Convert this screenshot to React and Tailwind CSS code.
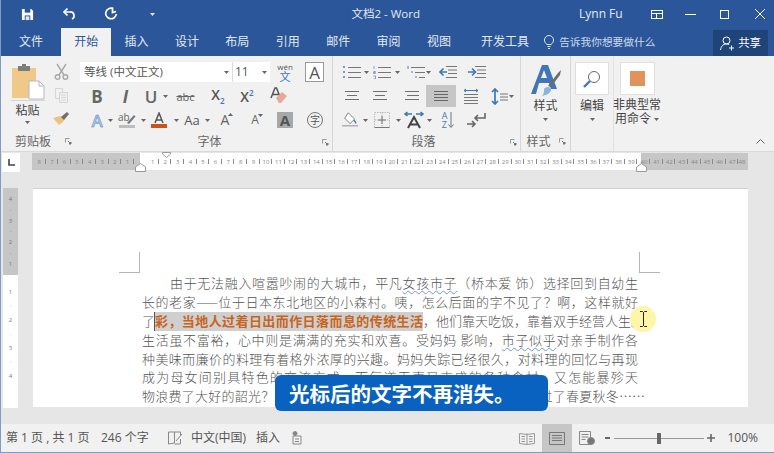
import React from "react";

const G = "#6f6f6f";
const Svg = ({ w = 16, h = 16, children, className = "" }) => (
  <svg width={w} height={h} viewBox={`0 0 ${w} ${h}`} fill="none" className={className}>{children}</svg>
);
const Caret = ({ c = "#666" }) => <svg width="5" height="3" viewBox="0 0 5 3"><path d="M0 0h5L2.5 3z" fill={c} /></svg>;
const Cell = ({ w, children, active }) => (
  <div className={`${w} h-[22px] flex items-center justify-center shrink-0 ${active ? "bg-[#c6c6c6]" : ""}`}>{children}</div>
);
const Row = ({ pl, children }) => <div className={`h-6 flex items-center ${pl}`}>{children}</div>;
const Launcher = () => (
  <svg width="7" height="7" viewBox="0 0 7 7"><path d="M0.5 0.5h4M0.5 0.5v4" stroke="#999" /><path d="M3 3l3 3M6 4v2H4" stroke="#777" /></svg>
);
const GroupLabel = ({ children, className = "" }) => (
  <div className={`h-5 relative flex items-center justify-center text-[12px] text-[#666] ${className}`}>{children}</div>
);

const Lines = ({ rows, w = 16, h = 12, c = G }) => (
  <Svg w={w} h={h}>
    {rows.map((r, i) => <path key={i} d={`M${r[0]} ${r[2]}H${r[1]}`} stroke={c} strokeWidth="1" />)}
  </Svg>
);

const Save = () => (
  <svg width="13" height="13" viewBox="0 0 14 14"><path d="M1 1h10l2 2v10H1z" fill="#fff" /><path d="M4 1h6v4H4z" fill="#2b579a" /><path d="M4 8h6v5H4z" fill="#2b579a" /><path d="M5 9h4v4H5z" fill="#dfe6f1" /></svg>
);
const Undo = () => (
  <svg width="14" height="14" viewBox="0 0 14 14" fill="none" stroke="#fff" strokeWidth="1.7"><path d="M5.5 1.5L2 5l3.5 3.5" /><path d="M2 5h6a3.7 3.7 0 0 1 2 7" /></svg>
);
const Redo = () => (
  <svg width="14" height="14" viewBox="0 0 14 14" fill="none" stroke="#fff" strokeWidth="1.7"><path d="M9 1.5A5.3 5.3 0 1 0 12.3 7" /><path d="M8.5 0.5v5l3.5-1" /></svg>
);
const Paste = () => (
  <svg width="34" height="36" viewBox="0 0 34 36">
    <path d="M1 4h24v30H1z" fill="#f0c98a" />
    <path d="M7 2h12v5H7z" fill="#7d7d7d" /><path d="M11 0h4v3h-4z" fill="#7d7d7d" />
    <path d="M18 17h10l5 5v13H18z" fill="#fff" stroke="#b8b8b8" /><path d="M28 17v5h5" fill="none" stroke="#b8b8b8" />
  </svg>
);
const Cut = () => (
  <svg width="15" height="17" viewBox="0 0 15 17" fill="none" stroke="#a8a8a8" strokeWidth="1.4"><path d="M3 1l7 11M12 1L5 12" /><circle cx="3.6" cy="14" r="2.3" /><circle cx="11.4" cy="14" r="2.3" /></svg>
);
const Copy = () => (
  <svg width="15" height="16" viewBox="0 0 15 16" fill="none" stroke="#d5d5d5"><path d="M1.5 1.5h7v4M1.5 1.5v10h4" /><path d="M5.5 5.5h8v10h-8z" /><path d="M7 8h5M7 10.5h5M7 13h5" /></svg>
);
const Painter = () => (
  <svg width="16" height="14" viewBox="0 0 16 14"><path d="M0 6l6 7 4-3 2-4-5-2z" fill="#edc27f" /><path d="M8 5l6-5 2 2-5 6z" fill="#6f6f6f" /></svg>
);
const Txt = ({ children, className = "" }) => <span className={`leading-none ${className}`}>{children}</span>;
const Eraser = () => (
  <svg width="18" height="18" viewBox="0 0 18 18"><path d="M1 11L5 1h1.500l4 10M2.500 7.500h6" stroke="#555" strokeWidth="1.500" fill="none" /><path d="M6 11l6-6 5 4-6 7H9z" fill="#e7a995" /></svg>
);
const Highlighter = () => (
  <svg width="18" height="17" viewBox="0 0 18 17"><path d="M9 11l7-8 1.5 1.5L11 12z" fill="#777" /><path d="M1 13h16v3H1z" fill="#bdbdbd" /></svg>
);
const ColorA = () => (
  <svg width="18" height="17" viewBox="0 0 18 17"><path d="M5 11L9 1l4 10M6.2 8h5.6" stroke="#555" strokeWidth="1.5" fill="none" /><path d="M1 12h16v4H1z" fill="#c9521d" /></svg>
);
const CircleZi = () => (
  <div className="w-4 h-4 rounded-full border border-[#777] flex items-center justify-center text-[10px] text-[#555] leading-none">字</div>
);
const Bullet = ({ n }) => (
  <svg width="18" height="14" viewBox="0 0 18 14" stroke="#777" fill="none">
    {n ? (
      <path d="M1 1v3M0.500 6.500h2v1h-2v1h2M0.500 11h2v3h-2" stroke="#5a7fb0" strokeWidth="0.700" />
    ) : (
      <path d="M0 2h2M0 7h2M0 12h2" stroke="#4e7fb8" strokeWidth="1.5" />
    )}
    <path d="M5 2.5h13M5 7.5h13M5 12.5h13" />
  </svg>
);
const Multi = () => (
  <svg width="18" height="14" viewBox="0 0 18 14" stroke="#777" fill="none">
    <path d="M1 1v3" stroke="#5a7fb0" />
    <path d="M4 2.5h14M8 7.5h10M12 12.5h6" />
    <path d="M5 6v2M9 11v2" stroke="#5a7fb0" />
  </svg>
);
const Indent = ({ inc }) => (
  <svg width="18" height="14" viewBox="0 0 18 14" stroke="#777" fill="none">
    <path d="M7 1.5h11M9 5h9M9 8.5h9M7 12.5h11" />
    {inc ? <path d="M0 7h7M4 3.5L7.5 7 4 10.5" stroke="#3d78b8" strokeWidth="1.6" /> : <path d="M8 7H1M4.5 3.5L1 7l3.5 3.5" stroke="#3d78b8" strokeWidth="1.6" />}
  </svg>
);
const Dist = () => (
  <svg width="16" height="17" viewBox="0 0 16 17" fill="none"><path d="M1 2.5h14M3 1L1 2.5 3 4M13 1l2 1.5L13 4" stroke="#3d78b8" /><path d="M1 6.5h14M1 9.5h14M1 12.5h14M1 15.5h14" stroke="#777" strokeWidth="1.2" /></svg>
);
const LineSp = () => (
  <svg width="21" height="17" viewBox="0 0 21 17" fill="none"><path d="M4 1v15M1 4l3-3 3 3M1 13l3 3 3-3" stroke="#3d78b8" strokeWidth="1.7" /><path d="M9 6h8M9 9h8M9 12h8" stroke="#777" /></svg>
);
const Shade = () => (
  <svg width="20" height="18" viewBox="0 0 20 18" fill="none"><path d="M7 1l7 7-5 5-6-6z" fill="#fff" stroke="#777" /><path d="M13 9c2 2 3 3 2 4" stroke="#3d78b8" strokeWidth="1.5" /><path d="M0 15.5h18" stroke="#888" /></svg>
);
const Borders = () => (
  <svg width="16" height="16" viewBox="0 0 16 16" fill="none" stroke="#bbb"><path d="M.5.5h15v15H.5zM8 .5v15M.5 8h15" strokeDasharray="1.5 1" /><path d="M.5 15.5h15M8 4v8M4 8h8" stroke="#777" /></svg>
);
const CharDir = () => (
  <svg width="20" height="18" viewBox="0 0 20 18" fill="none"><path d="M1 3h7M3.500 1L1 3l2.500 2M12 3h7M16.500 1L19 3l-2.500 2" stroke="#3d78b8" strokeWidth="1.5" /><path d="M4 17l6-11 6 11M6 13.500h8" stroke="#444" strokeWidth="2" /></svg>
);
const Sort = () => (
  <div className="flex items-center gap-[1px]">
    <div className="flex flex-col text-[9px] leading-[9px] text-[#3d78b8]"><span>A</span><span>Z</span></div>
    <svg width="6" height="18" viewBox="0 0 6 18"><path d="M3 1v15M.5 13.500L3 16.500l2.500-3" stroke="#777" fill="none" /></svg>
  </div>
);
const ReturnI = () => (
  <svg width="20" height="16" viewBox="0 0 20 16" fill="none"><path d="M18 1v5H8M11 3L8 6l3 3" stroke="#666" strokeWidth="1.6" /><path d="M0 12h8M5 9l3 3-3 3" stroke="#666" strokeWidth="1.6" /></svg>
);
const StylesI = () => (
  <svg width="32" height="34" viewBox="0 0 32 34">
    <path d="M1 30L12 1h6l9 24h-6l-2-6H9l-3 11zM11 14h6l-3-8z" fill="#3f76b5" fillRule="evenodd" />
    <path d="M18 22l10-13 3-3-1 5-9 12z" fill="#6d6d6d" />
    <path d="M14 25c3-3 6-2 7 0 0 4-4 6-9 7 2-2 2-4 2-7z" fill="#8db3da" />
  </svg>
);
const Mag = () => (
  <svg width="18" height="18" viewBox="0 0 18 18" fill="none"><circle cx="11" cy="7" r="5.500" stroke="#666" /><path d="M7 11l-6 6" stroke="#3d78b8" strokeWidth="2.400" /></svg>
);
const Num = ({ children }) => (
  <div className="w-[12.6px] h-full shrink-0 relative flex items-center justify-center text-[6px] leading-none text-[#888]">
    {children}
    <span className="absolute right-0 top-[6px] h-[5px] w-px bg-[#888]" />
  </div>
);

const LINE = "h-[18.9px] leading-[18.9px] whitespace-nowrap [text-align:justify] [text-align-last:justify]";
const Wavy = ({ children }) => <span className="underline decoration-wavy decoration-[#6f93d6] decoration-[1px] underline-offset-2">{children}</span>;

const Tab = ({ w, children, active }) => (
  <div className={`${w} h-full flex items-center justify-center shrink-0 ${active ? "bg-[#f1f1f1] text-[#2b579a]" : "text-[#e3e9f3]"}`}>{children}</div>
);

export default function App() {
  const left = [8, 7, 6, 5, 4, 3, 2, 1];
  const mid = Array.from({ length: 39 }, (_, i) => i + 1);
  const right = [40, 41, 42, 43, 44, 45, 46, 47];
  return (
    <div className="w-[774px] h-[453px] overflow-hidden relative flex flex-col bg-[#e6e6e6] text-[12px] font-['Open_Sans','Noto_Sans_CJK_SC',sans-serif] border-l border-b border-[#7f9cc4]">
      {/* title bar */}
      <div className="h-[28px] bg-[#2b579a] flex items-center text-[#e3e9f3] shrink-0">
        <div className="w-[49px] pl-[3px] flex justify-center"><Save /></div>
        <div className="w-[38px] flex justify-center"><Undo /></div>
        <div className="w-[46px] flex justify-center"><Redo /></div>
        <div className="w-[36px] flex justify-center"><Caret c="#e3e9f3" /></div>
        <div className="w-[250px] flex justify-end text-[11.500px] whitespace-nowrap">文档2 - Word</div>
        <div className="ml-[159px] text-[12px] whitespace-nowrap">Lynn Fu</div>
        <div className="ml-[28px] w-[12px] h-[9px] border border-white relative shrink-0"><span className="absolute left-0 right-0 top-[2px] h-px bg-white" /><span className="absolute left-[4px] top-[2px] bottom-0 w-px bg-white" /></div>
        <div className="ml-[22px] w-[11px] h-px bg-white shrink-0" />
        <div className="ml-[24px] w-[9px] h-[9px] border border-white shrink-0" />
        <svg className="ml-[26px] shrink-0" width="10" height="10" viewBox="0 0 10 10" stroke="#fff"><path d="M0 0l10 10M10 0L0 10" /></svg>
      </div>
      {/* tabs */}
      <div className="h-[28px] bg-[#2b579a] flex items-stretch text-[12px] shrink-0">
        <Tab w="w-[60px]">文件</Tab>
        <Tab w="w-[50.4px]" active>开始</Tab>
        <Tab w="w-[50.4px]">插入</Tab>
        <Tab w="w-[50.4px]">设计</Tab>
        <Tab w="w-[50.4px]">布局</Tab>
        <Tab w="w-[50.4px]">引用</Tab>
        <Tab w="w-[50.4px]">邮件</Tab>
        <Tab w="w-[50.4px]">审阅</Tab>
        <Tab w="w-[50.4px]">视图</Tab>
        <Tab w="w-[82px]">开发工具</Tab>
        <div className="flex items-center text-[#cdd8ea] text-[10.700px] w-[167px] whitespace-nowrap">
          <svg className="ml-[-2px] mr-[5px]" width="10" height="14" viewBox="0 0 10 14" fill="none" stroke="#dfe6f1"><path d="M3 9.500C1 8 .5 6.500.5 5a4.500 4.500 0 0 1 9 0c0 1.500-.5 3-2.500 4.500zM3.500 11.500h3M4 13.500h2" /></svg>
          告诉我你想要做什么
        </div>
        <div className="w-[55px] mt-[2px] bg-[#1f4478] flex items-center justify-center gap-[3px] text-white text-[11.500px]">
          <svg width="15" height="15" viewBox="0 0 15 15" fill="none" stroke="#fff"><circle cx="6.500" cy="4.500" r="3.500" /><path d="M.5 14c.5-3.500 2.500-6 6-6 1 0 2 .2 2.700.6M11.500 9.500v5M9 12h5" /></svg>
          共享
        </div>
      </div>
      {/* ribbon */}
      <div className="h-[96px] bg-[#f1f1f1] border-b border-[#d9d9d9] flex shrink-0 text-[#444]">
        {/* clipboard */}
        <div className="w-[71px] flex flex-col shrink-0">
          <div className="flex-1 flex">
            <div className="w-[49px] flex flex-col items-center pt-[8px] pl-[4px]">
              <Paste />
              <div className="w-[34px] h-px bg-[#d5d5d5]" />
              <div className="mt-[2px] text-[12px] leading-[16px]">粘贴</div>
              <div className="mt-[2px]"><Caret /></div>
            </div>
            <div className="w-[22px] flex flex-col items-center pt-[4px]">
              <Cell w="w-full"><Cut /></Cell>
              <div className="h-[2px]" />
              <Cell w="w-full"><Copy /></Cell>
              <div className="h-[2px]" />
              <Cell w="w-full"><Painter /></Cell>
            </div>
          </div>
          <GroupLabel className="pt-[1px]"><span className="mr-[7px]">剪贴板</span><span className="absolute right-[0px] top-[7px]"><Launcher /></span></GroupLabel>
        </div>
        {/* font */}
        <div className="w-[261px] flex flex-col shrink-0 border-r border-[#d6d6d6]">
          <div className="flex-1 pt-[4px]">
            <Row pl="pl-[8px]">
              <div className="w-[153px] h-[20px] bg-white flex items-center pl-[4px] pr-[3px] text-[11.500px] text-[#555] border-r border-[#ddd]">
                <span className="flex-1 whitespace-nowrap">等线 (中文正文)</span><Caret />
              </div>
              <div className="w-[37px] h-[20px] bg-white flex items-center pl-[2px] pr-[3px] text-[12px] text-[#555]"><span className="flex-1">11</span><Caret /></div>
              <div className="w-[30px] h-[20px] flex flex-col items-center justify-center leading-none">
                <span className="text-[8px] text-[#555] leading-[8px]">wén</span>
                <span className="text-[11px] text-[#3f76b5] leading-[11px]">文</span>
              </div>
              <div className="w-[19px] h-[20px] ml-[5px] bg-white border border-[#999] flex items-center justify-center text-[17px] leading-none text-[#555]">A</div>
            </Row>
            <Row pl="pl-[11px]">
              <Cell w="w-[28px]"><Txt className="text-[17px] font-bold text-[#666]">B</Txt></Cell>
              <Cell w="w-[29px]"><Txt className="text-[17px] font-bold italic text-[#666]">I</Txt></Cell>
              <Cell w="w-[22px]"><Txt className="text-[17px] font-semibold text-[#666]">U</Txt></Cell>
              <Cell w="w-[7px]"><Caret /></Cell>
              <Cell w="w-[33px]"><Txt className="text-[11px] line-through text-[#666]">abc</Txt></Cell>
              <Cell w="w-[32px]"><Txt className="text-[14px] text-[#555] font-semibold">X<span className="text-[8px] text-[#3f76b5] align-sub">2</span></Txt></Cell>
              <Cell w="w-[26px]"><Txt className="text-[14px] text-[#555] font-semibold">X<span className="text-[8px] text-[#3f76b5] align-super">2</span></Txt></Cell>
              <Cell w="w-[38px]"><Eraser /></Cell>
            </Row>
            <Row pl="pl-[14px]">
              <Cell w="w-[22px]"><Txt className="text-[17px] text-[#a9c6e6] font-semibold [-webkit-text-stroke:0.4px_#3f76b5]">A</Txt></Cell>
              <Cell w="w-[5px]"><Caret /></Cell>
              <Cell w="w-[28px]"><div className="relative w-[18px] h-[17px]"><span className="absolute left-0 top-0 text-[10px] leading-[10px] text-[#666]">ab</span><span className="absolute left-0 top-0"><Highlighter /></span></div></Cell>
              <Cell w="w-[5px]"><Caret /></Cell>
              <Cell w="w-[26px]"><ColorA /></Cell>
              <Cell w="w-[8px]"><Caret /></Cell>
              <Cell w="w-[24px]"><Txt className="text-[13px] text-[#555]">Aa</Txt></Cell>
              <Cell w="w-[6px]"><Caret /></Cell>
              <Cell w="w-[30px]"><Txt className="text-[14px] text-[#666] relative">A<svg className="absolute right-[-4px] top-[0px]" width="5" height="3" viewBox="0 0 5 3"><path d="M0 3l2.500-3L5 3z" fill="#666" /></svg></Txt></Cell>
              <Cell w="w-[30px]"><Txt className="text-[12px] text-[#666] relative">A<svg className="absolute right-[-4px] top-[0px]" width="5" height="3" viewBox="0 0 5 3"><path d="M0 0h5L2.500 3z" fill="#666" /></svg></Txt></Cell>
              <Cell w="w-[30px]"><div className="w-[16px] h-[16px] bg-[#a8a8a8] flex items-center justify-center text-[15px] font-bold leading-none text-[#555]">A</div></Cell>
              <Cell w="w-[30px]"><CircleZi /></Cell>
            </Row>
          </div>
          <GroupLabel className="pt-[1px]"><span className="ml-[15px]">字体</span><span className="absolute right-[3px] top-[7px]"><Launcher /></span></GroupLabel>
        </div>
        {/* paragraph */}
        <div className="w-[188px] flex flex-col shrink-0 border-r border-[#d6d6d6]">
          <div className="flex-1 pt-[4px]">
            <Row pl="pl-[10px]">
              <Cell w="w-[18px]"><Bullet /></Cell>
              <Cell w="w-[10px]"><Caret /></Cell>
              <Cell w="w-[22px]"><Bullet n /></Cell>
              <Cell w="w-[8px]"><Caret /></Cell>
              <div className="w-[5px]" />
              <Cell w="w-[19px]"><Multi /></Cell>
              <Cell w="w-[7px]"><Caret /></Cell>
              <Cell w="w-[32px]"><Indent /></Cell>
              <Cell w="w-[26px]"><Indent inc /></Cell>
            </Row>
            <Row pl="pl-[10px]">
              <Cell w="w-[18px]"><Lines rows={[[1, 15, 1.5], [3, 13, 5.5], [1, 15, 9.5]]} /></Cell>
              <Cell w="w-[38px]"><Lines rows={[[1, 15, 1.5], [3, 13, 5.5], [1, 15, 9.5]]} /></Cell>
              <Cell w="w-[25px]"><Lines rows={[[1, 15, 1.5], [3, 15, 5.5], [1, 15, 9.5]]} /></Cell>
              <div className="w-[2px]" />
              <Cell w="w-[30px]" active><Lines rows={[[1, 15, 1.5], [1, 15, 4.5], [1, 15, 7.5], [1, 15, 10.5]]} c="#666" /></Cell>
              <Cell w="w-[30px]"><Dist /></Cell>
              <Cell w="w-[30px]"><LineSp /></Cell>
              <span className="ml-[-7px]"><Caret /></span>
            </Row>
            <Row pl="pl-[9px]">
              <Cell w="w-[18px]"><Shade /></Cell>
              <Cell w="w-[10px]"><Caret /></Cell>
              <Cell w="w-[24px]"><Borders /></Cell>
              <Cell w="w-[8px]"><Caret /></Cell>
              <Cell w="w-[24px]"><CharDir /></Cell>
              <Cell w="w-[6px]"><Caret /></Cell>
              <Cell w="w-[32px]"><Sort /></Cell>
              <Cell w="w-[26px]"><ReturnI /></Cell>
            </Row>
          </div>
          <GroupLabel className="pt-[1px]"><span className="ml-[-6px]">段落</span><span className="absolute right-[3px] top-[7px]"><Launcher /></span></GroupLabel>
        </div>
        {/* styles */}
        <div className="w-[50px] flex flex-col shrink-0 border-r border-[#d6d6d6]">
          <div className="flex-1 flex flex-col items-center pt-[8px]">
            <StylesI />
            <div className="leading-[16px]">样式</div>
            <div className="mt-[4px]"><Caret /></div>
          </div>
          <GroupLabel className="pt-[1px]"><span className="mr-[14px]">样式</span><span className="absolute right-[4px] top-[7px]"><Launcher /></span></GroupLabel>
        </div>
        {/* edit */}
        <div className="w-[43px] flex flex-col items-center pt-[6px] shrink-0 border-r border-[#e2e2e2]">
          <div className="w-[34px] h-[33px] bg-white border border-[#e0e0e0] flex items-center justify-center"><Mag /></div>
          <div className="mt-[3px] leading-[16px]">编辑</div>
          <div className="mt-[4px]"><Caret /></div>
        </div>
        {/* custom */}
        <div className="w-[46px] flex flex-col items-center pt-[6px] shrink-0">
          <div className="w-[35px] h-[33px] bg-white border border-[#e0e0e0] flex items-center justify-center"><div className="w-[15px] h-[15px] bg-[#e0935a]" /></div>
          <div className="mt-[3px] leading-[14px] text-center whitespace-nowrap">非典型常<br />用命令 <span className="inline-block align-middle"><Caret /></span></div>
        </div>
        <div className="flex-1 flex items-end justify-end pb-[7px] pr-[9px]">
          <svg width="9" height="5" viewBox="0 0 9 5" fill="none" stroke="#666"><path d="M.5 4.500L4.500.5l4 4" /></svg>
        </div>
      </div>
      {/* workspace */}
      <div className="flex-1 grid grid-cols-[31px_716px_26px] grid-rows-[36px_1fr] min-h-0">
        <div className="pl-[1px] pt-[1px]">
          <div className="w-[18px] h-[19px] bg-white flex items-center justify-center">
            <svg width="7" height="7" viewBox="0 0 7 7"><path d="M1 0v6h6" stroke="#444" strokeWidth="1.600" fill="none" /></svg>
          </div>
        </div>
        <div className="relative">
          <div className="h-[17px] mt-[1px] flex bg-[#c6c6c6] overflow-hidden">
            <div className="w-[108px] flex shrink-0 justify-end pr-[6.3px]">{left.map((n) => <Num key={n}>{n}</Num>)}</div>
            <div className="w-[501px] flex shrink-0 bg-white pl-[6.3px]">{mid.map((n) => <Num key={n}>{n}</Num>)}</div>
            <div className="flex-1 flex ml-[-3.3px]">{right.map((n) => <Num key={n}>{n}</Num>)}<div className="w-[6px] shrink-0 flex items-center text-[6px] leading-none text-[#888]">48</div></div>
          </div>
          <svg className="absolute left-[103px] top-[11px]" width="11" height="9" viewBox="0 0 11 9"><path d="M.5 8.500V4L5.500.5l5 3.500v4.500z" fill="#fff" stroke="#999" /></svg>
          <svg className="absolute left-[130px] top-0" width="9" height="6" viewBox="0 0 9 6"><path d="M.5.5h8V2L4.500 5.500.5 2z" fill="#fff" stroke="#999" /></svg>
          <svg className="absolute left-[604px] top-[11px]" width="11" height="9" viewBox="0 0 11 9"><path d="M.5 8.500V4L5.500.5l5 3.500v4.500z" fill="#fff" stroke="#999" /></svg>
        </div>
        <div />
        <div className="pl-[2px]">
          <div className="w-[15px] h-[220px]">
            <div className="h-[87px] bg-[#c6c6c6] flex flex-col items-center justify-around py-[6px] text-[6px] leading-none text-[#777]">
              <span>4</span><span>·</span><span>3</span><span>·</span><span>2</span><span>·</span><span>1</span>
            </div>
            <div className="h-[133px] bg-white flex flex-col items-center gap-[8px] pt-[14px] text-[6px] leading-none text-[#777]">
              <span>1</span><span>·</span><span>2</span><span>·</span><span>3</span><span>·</span><span>4</span>
            </div>
          </div>
        </div>
        <div>
          <div className="h-[219px] ml-[1px] bg-white border-t border-[#d2d2d2] overflow-hidden relative">
            <div className="absolute left-[86px] top-[63px] w-[21px] h-[21px] border-r border-b border-[#b5b5b5]" />
            <div className="absolute left-[606px] top-[63px] w-[21px] h-[21px] border-l border-b border-[#b5b5b5]" />
            <div className="w-[496px] ml-[109px] mt-[85px] text-[13px] text-[#555] font-['Noto_Sans_CJK_SC',sans-serif] font-light">
              <div className={`${LINE} ml-[28px] w-[468px]`}>由于无法融入喧嚣吵闹的大城市，平凡<Wavy>女孩市子</Wavy>（桥本爱 饰）选择回到自幼生</div>
              <div className={LINE}>长的老家——位于日本东北地区的小森村。咦，怎么后面的字不见了？啊，这样就好</div>
              <div className="h-[18.9px] leading-[18.9px] whitespace-nowrap flex">
                <span className="w-[12px] shrink-0">了</span>
                <span className={`${LINE} w-[269px] shrink-0 bg-[#cfcfcf] text-[#c8641c] font-bold border-l border-[#555]`}>彩，当地人过着日出而作日落而息的传统生活</span>
                <span className={`${LINE} flex-1`}>，他们靠天吃饭，靠着双手经营人生。</span>
              </div>
              <div className={LINE}>生活虽不富裕，心中则是满满的充实和欢喜。受妈妈 影响，<Wavy>市子似乎</Wavy>对亲手制作各</div>
              <div className={LINE}>种美味而廉价的料理有着格外浓厚的兴趣。妈妈失踪已经很久，对料理的回忆与再现</div>
              <div className={LINE}>成为母女间别具特色的交流方式。而每道无声又丰盛的各种食材，又怎能暴殄天</div>
              <div className={`${LINE} w-[503px]`}>物浪费了大好的韶光？她们一年又一年，母女俩在这小森村里一起度过了春夏秋冬……</div>
            </div>
            {/* cursor highlight */}
            <div className="absolute left-[597px] top-[117px] w-[26px] h-[26px] rounded-full bg-[#fdf6a8] flex items-center justify-center">
              <svg width="9" height="16" viewBox="0 0 9 16" fill="none" stroke="#222"><path d="M1 .5h2.500l1 1 1-1H8M1 15.500h2.500l1-1 1 1H8M4.500 1.500v13" /></svg>
            </div>
          </div>
        </div>
        <div />
      </div>
      {/* status bar */}
      <div className="h-[28px] bg-[#f1f1f1] flex items-center text-[12px] text-[#555] shrink-0 pl-[5px]">
        <span className="w-[95px] whitespace-nowrap">第 1 页 , 共 1 页</span>
        <span className="w-[60px] whitespace-nowrap">246 个字</span>
        <svg className="w-[30px]" width="16" height="14" viewBox="0 0 16 14" fill="none" stroke="#888"><path d="M.5 1v12l6-1V1zM6.500 1h6v3M12.500 8v5h-6M8 10l6-7" /></svg>
        <span className="w-[65px] whitespace-nowrap">中文(中国)</span>
        <span className="w-[36px]">插入</span>
        <svg width="10" height="14" viewBox="0 0 10 14" fill="none" stroke="#888"><circle cx="3" cy="2.500" r="2" fill="#888" /><path d="M1 5h8v8H1zM3 8h4M3 10.500h4" /></svg>
        <div className="flex-1" />
        <svg className="mr-[7px]" width="16" height="13" viewBox="0 0 16 13" fill="none" stroke="#999"><path d="M8 1.500v11M.5 1.500l7.500 1 7.500-1v10l-7.500 1-7.500-1zM2.500 4.500h3.500M2.500 7h3.500M2.500 9.500h3.500M10 4.500h3.500M10 7h3.500M10 9.500h3.500" /></svg>
        <div className="w-[30px] h-full bg-[#c6c6c6] flex items-center justify-center">
          <svg width="16" height="13" viewBox="0 0 16 13" fill="none" stroke="#777"><path d="M.5.5h15v12H.5zM3 3.500h10M3 6h10M3 8.500h10" /></svg>
        </div>
        <svg className="ml-[7px]" width="16" height="14" viewBox="0 0 16 14" fill="none" stroke="#888"><path d="M.5.5h11v13H.5zM2.500 3.500h7M2.500 6h7M2.500 8.500h4" /><circle cx="12" cy="10" r="3.500" fill="#777" /></svg>
        <span className="ml-[10px] w-[5px] h-[2px] bg-[#666]" />
        <div className="ml-[4px] w-[90px] h-px bg-[#999] relative">
          <span className="absolute left-[43px] top-[-5px] w-[4px] h-[11px] bg-[#666]" />
        </div>
        <svg className="ml-[3px]" width="8" height="8" viewBox="0 0 8 8" stroke="#666" strokeWidth="1.600"><path d="M0 4h8M4 0v8" /></svg>
        <span className="ml-[12px] mr-[16px]">100%</span>
      </div>
      {/* caption */}
      <div className="absolute left-[274px] top-[375px] w-[273px] h-[36px] bg-[#0a62c0] rounded-[6px] flex items-center pl-[14px] text-white text-[20.500px] font-bold font-['Noto_Sans_CJK_SC',sans-serif] leading-none whitespace-nowrap">
        光标后的文字不再消失。
      </div>
    </div>
  );
}
